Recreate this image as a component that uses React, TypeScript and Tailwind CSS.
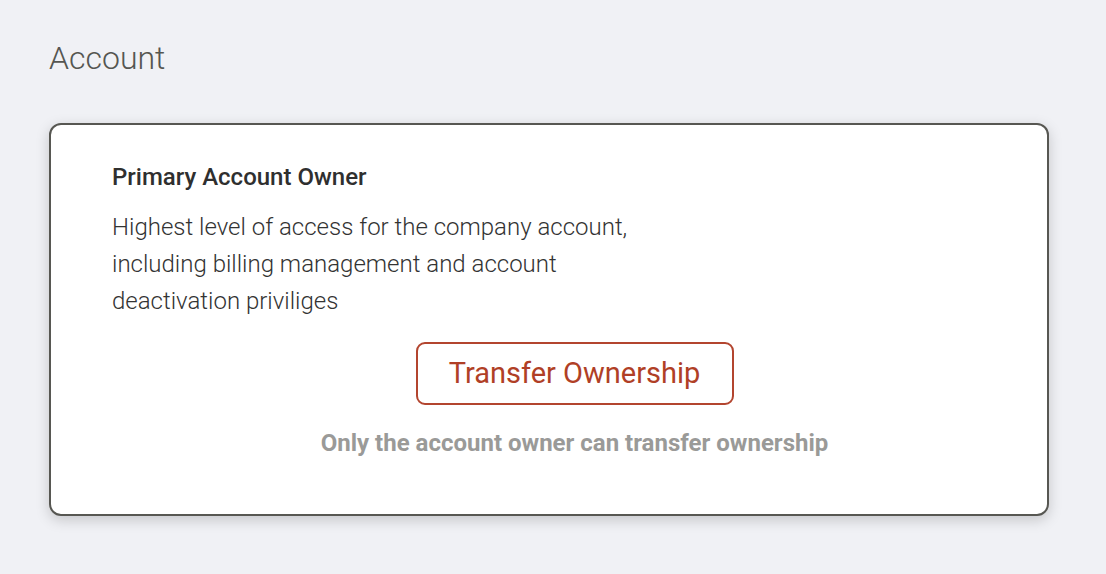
export default function App() {
  return (
    <div
      className="min-h-[574px] w-full bg-[#f0f1f5] px-[49px] pt-[38px] text-[#333]"
      style={{ fontFamily: 'Roboto, "Noto Sans", sans-serif' }}
    >
      <h1 className="text-[32px] font-light leading-[40px] text-[#555651]">Account</h1>
      <div className="mt-[45px] w-[1000px] rounded-[12px] border-2 border-[#575752] bg-white pb-[57px] pl-[61px] pr-[10px] pt-[37px] shadow-[0_4px_14px_rgba(0,0,0,0.18)]">
        <div className="text-[24px] font-medium leading-[30px] text-[#2f2f2f]">Primary Account Owner</div>
        <p className="mt-[17px] w-[530px] text-[24px] font-light leading-[37px] text-[#333]">
          Highest level of access for the company account, including billing management and account
          deactivation priviliges
        </p>
        <div className="mt-[22px] flex flex-col items-center">
          <button className="flex h-[63px] w-[318px] items-center justify-center rounded-[9px] border-2 border-[#b3452f] bg-white text-[29px] text-[#b03f26]">
            Transfer Ownership
          </button>
          <div className="mt-[24px] text-[24px] font-bold leading-[28px] text-[#9a9a98]">
            Only the account owner can transfer ownership
          </div>
        </div>
      </div>
    </div>
  );
}
